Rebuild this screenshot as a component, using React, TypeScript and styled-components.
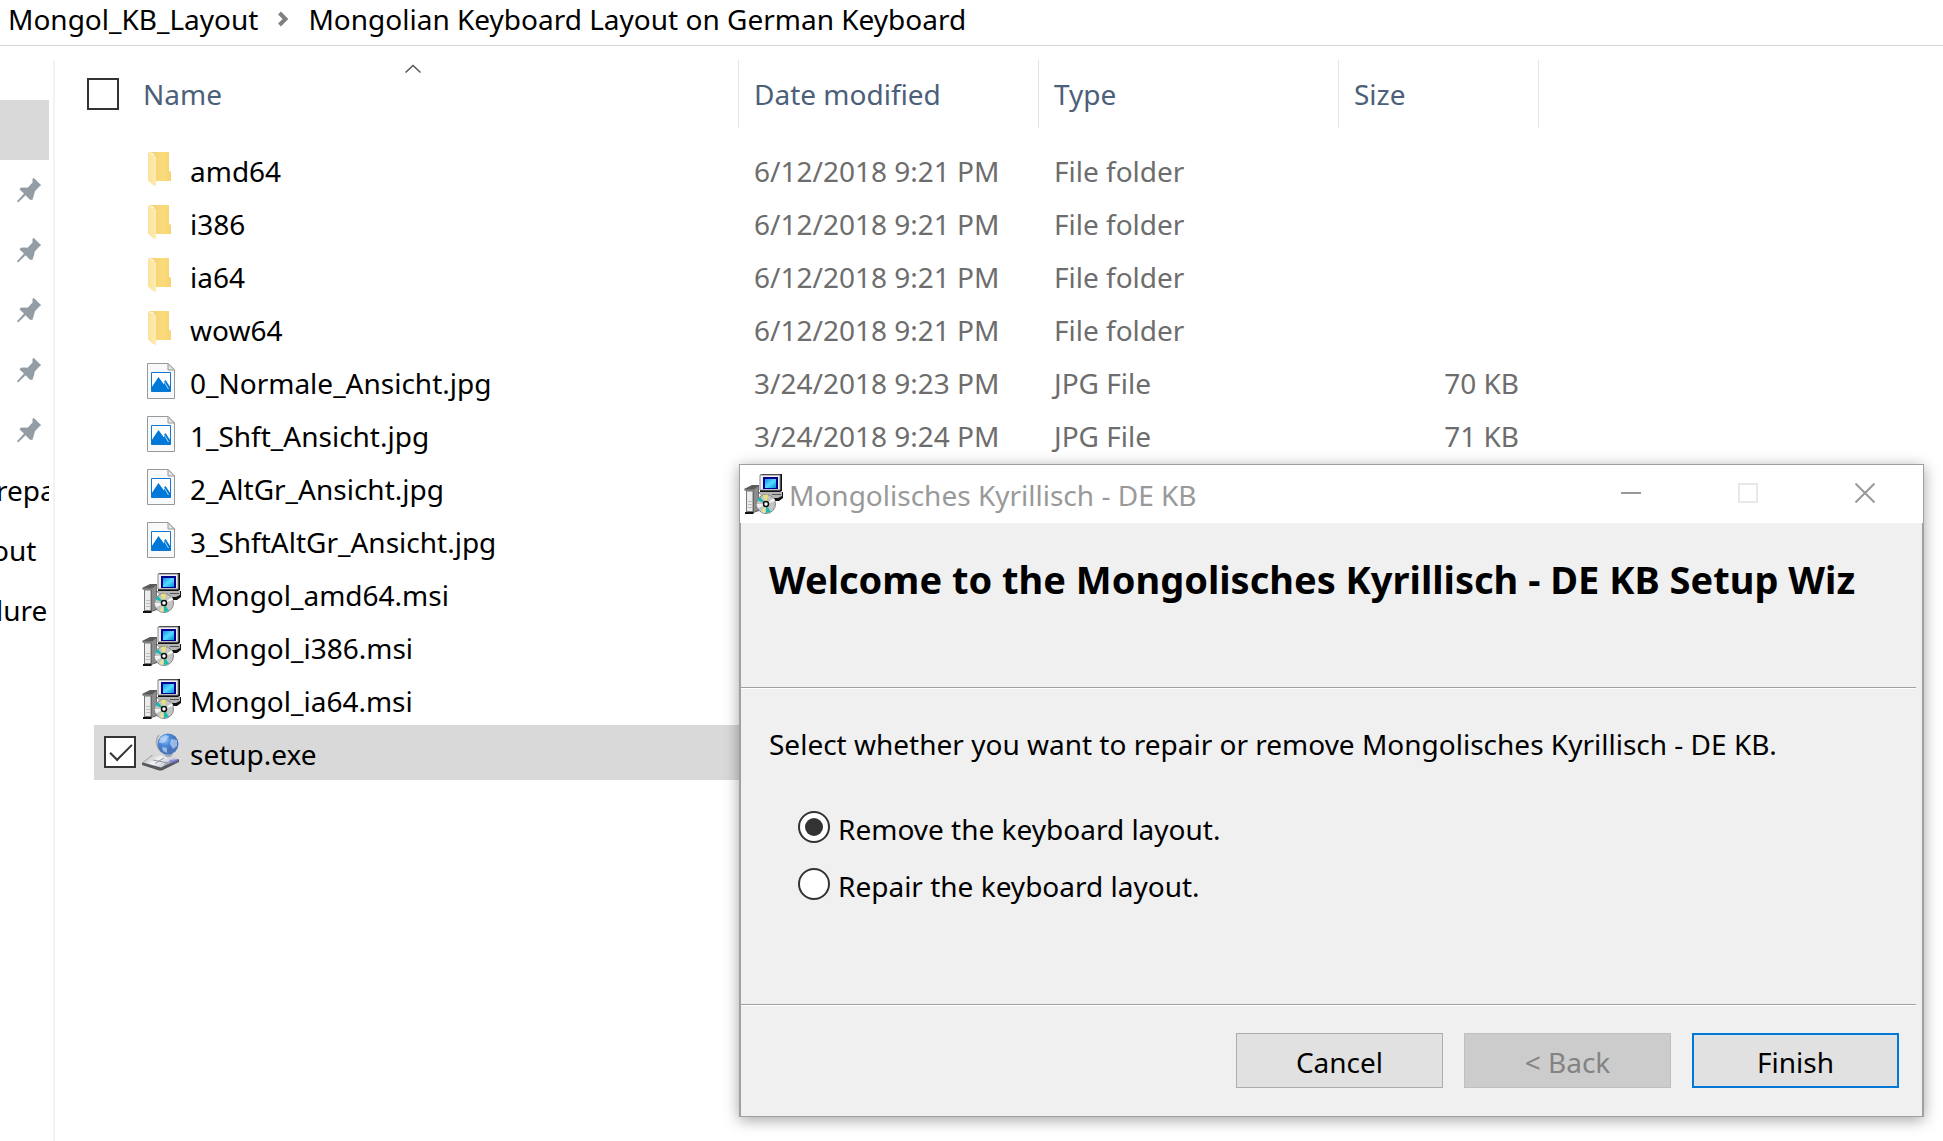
import React, { useState } from "react";
import styled, { createGlobalStyle, css } from "styled-components";

const GlobalStyle = createGlobalStyle`
  *, *::before, *::after { box-sizing: border-box; }
  body {
    margin: 0;
    background: #fff;
    color: #000;
    font-family: "Noto Sans", "Open Sans", sans-serif;
    font-size: 28px;
    line-height: 38px;
  }
  button, input { font: inherit; margin: 0; }
`;

const Page = styled.div`
  position: relative;
  min-height: 100vh;
  display: flex;
  flex-direction: column;
  overflow: hidden;
`;

const Breadcrumb = styled.nav`
  display: flex;
  align-items: center;
  gap: 18px;
  padding: 0 8px 7px;
  border-bottom: 1px solid #d5d5d5;
`;

const Crumb = styled.a`
  color: #000;
  text-decoration: none;
  white-space: nowrap;
`;

const Explorer = styled.div`
  flex: 1;
  display: flex;
  padding-top: 14px;
`;

const Sidebar = styled.aside`
  flex: none;
  width: 55px;
  padding: 40px 4px 0 0;
  border-right: 2px solid #f3f3f3;
`;

const SideItem = styled.div<{ $selected?: boolean }>`
  height: 60px;
  display: flex;
  align-items: center;
  overflow: hidden;
  white-space: nowrap;
  background: ${(p) => (p.$selected ? "#d9d9d9" : "transparent")};
`;

const PinSlot = styled.span`
  display: flex;
  padding-left: 16px;
`;

const SideText = styled.span<{ $scrolled: number }>`
  margin-left: -${(p) => p.$scrolled}px;
`;

const Files = styled.main`
  flex: 1;
  min-width: 0;
`;

const FileTable = styled.table`
  width: 1484px;
  table-layout: fixed;
  border-spacing: 0;
  td, th { padding: 0; text-align: left; font-weight: 400; white-space: nowrap; }
`;

const Col = styled.col<{ $width: number }>`
  width: ${(p) => p.$width}px;
`;

const HeadCell = styled.th`
  height: 68px;
  color: #4c607a;
  border-right: 1px solid #e5e5e5;
`;

const HeadLabel = styled.div`
  padding-left: 15px;
`;

const NameHead = styled.div`
  position: relative;
  height: 68px;
  display: flex;
  align-items: center;
  gap: 24px;
  padding-left: 32px;
`;

const SortMark = styled.svg`
  position: absolute;
  left: 349px;
  top: 4px;
`;

const HeadGap = styled.tr`
  height: 14px;
`;

const Row = styled.tr<{ $selected: boolean }>`
  height: 53px;
  vertical-align: top;
  td { background: ${(p) => (p.$selected ? "#d9d9d9" : "transparent")}; background-clip: padding-box; }
  ${(p) => p.$selected && css`height: 55px;`}
`;

const NameCell = styled.td`
  border-left: 39px solid transparent;
`;

const NameLabel = styled.label`
  display: flex;
  align-items: center;
  padding-left: 10px;
`;

const CheckSlot = styled.span`
  flex: none;
  display: flex;
  width: 38px;
`;

const IconSlot = styled.span`
  flex: none;
  display: flex;
  width: 48px;
`;

const NameText = styled.span`
  padding-top: 5px;
  line-height: 48px;
`;

const InfoCell = styled.td<{ $end?: boolean }>`
  && {
    padding: 5px 20px 0 15px;
    color: #6d6d6d;
    line-height: 48px;
    text-align: ${(p) => (p.$end ? "right" : "left")};
  }
`;

const CheckBox = styled.input`
  appearance: none;
  position: relative;
  flex: none;
  width: 32px;
  height: 32px;
  border: 2px solid #333;
  background: #fff;
  &:checked::after {
    content: "";
    position: absolute;
    left: 4px;
    top: 6px;
    width: 22px;
    height: 11px;
    border: solid #333;
    border-width: 0 0 2px 2px;
    transform: rotate(-45deg);
  }
`;

const Dialog = styled.section`
  position: absolute;
  left: 739px;
  right: 19px;
  top: 464px;
  border: 1px solid #a0a0a0;
  background: #f0f0f0;
  box-shadow: 0 3px 14px rgba(0, 0, 0, 0.36);
`;

const TitleBar = styled.header`
  display: flex;
  align-items: center;
  height: 58px;
  padding-left: 4px;
  background: #fff;
`;

const Title = styled.span`
  flex: 1;
  padding: 2px 0 0 5px;
  color: #999;
`;

const WindowButton = styled.button`
  width: 117px;
  height: 58px;
  display: flex;
  align-items: center;
  justify-content: center;
  padding: 0 0 2px;
  border: 0;
  background: transparent;
`;

const DialogBody = styled.div`
  border: solid #a0a0a0;
  border-width: 0 1px;
`;

const Groove = styled.hr`
  height: 2px;
  margin: 0 6px 0 0;
  border: 0;
  border-top: 1px solid #a0a0a0;
  background: #fff;
`;

const Heading = styled.h1`
  height: 164px;
  margin: 0;
  padding: 29px 28px 0;
  overflow: hidden;
  font-size: 38px;
  line-height: 54px;
  font-weight: 700;
  white-space: nowrap;
`;

const Choices = styled.fieldset`
  height: 315px;
  margin: 0;
  padding: 0;
  border: 0;
`;

const Question = styled.legend`
  padding: 36px 28px 35px;
`;

const Choice = styled.label`
  display: flex;
  align-items: center;
  height: 57px;
  gap: 8px;
  padding-left: 57px;
`;

const ChoiceText = styled.span`
  padding-top: 4px;
`;

const Radio = styled.input`
  appearance: none;
  flex: none;
  display: grid;
  place-items: center;
  width: 32px;
  height: 32px;
  border: 2px solid #333;
  border-radius: 50%;
  background: #fff;
  &:checked::after {
    content: "";
    width: 18px;
    height: 18px;
    border-radius: 50%;
    background: #333;
  }
`;

const Actions = styled.footer`
  display: flex;
  justify-content: flex-end;
  gap: 21px;
  padding: 27px 23px 28px;
`;

const ActionButton = styled.button<{ $primary?: boolean }>`
  width: 207px;
  height: 55px;
  padding: 3px 0 0;
  color: #000;
  background: #e1e1e1;
  border: ${(p) => (p.$primary ? "2px solid #0078d7" : "1px solid #adadad")};
  &:disabled { color: #838383; background: #ccc; border-color: #bfbfbf; }
`;

const PinIcon = () => (
  <svg width="26" height="26" viewBox="0 0 26 26" aria-hidden="true">
    <path d="M17.6.8 25.2 8.2 23.6 9.2 18.8 14.6 18 18 16.4 23 13.6 22.4 9.6 18.2 2.6 25 1.4 25.2 1.2 24 8 16.6 3.6 12.4 4.6 10.8 8.6 10.4 11.6 10.8 16.6 5.6 16.4 2.6Z" fill="#939da5" />
  </svg>
);

const FolderIcon = () => (
  <svg width="40" height="34" viewBox="-6 0 40 34" aria-hidden="true">
    <path d="M1 0H21V18.5L23 20V29H6V2Z" fill="url(#folderBack)" />
    <path d="M0 0 8 4.6V34L5 33 0 28.5Z" fill="url(#folderFlap)" />
  </svg>
);

const PictureIcon = () => (
  <svg width="40" height="36" viewBox="-5 0 40 36" aria-hidden="true">
    <path d="M.5.5H21L27.500 7V35.500H.5Z" fill="#f8f9fa" stroke="#999" />
    <path d="M21 .5V7H27.500Z" fill="#e4e4e4" stroke="#999" />
    <path d="M4.500 9.500H23.500V28.500H4.500Z" fill="#fff" stroke="#1476d1" />
    <path d="M4.500 24.500 11.500 14 17 21.500 17 18.500 18.500 17 23.500 24.500V28.500H4.500Z" fill="#0078d7" />
    <path d="M17 18.500 21.500 26" stroke="#b9dcf7" strokeWidth="1" />
  </svg>
);

const InstallerIcon = () => (
  <svg width="40" height="40" viewBox="0 0 40 40" aria-hidden="true">
    <path d="M0 15 8 11H15V37L9 39H2V17Z" fill="#5a5a5a" />
    <path d="M0 15.500H10L14.500 12V36L10 38V17H1Z" fill="#8c8c8c" />
    <path d="M2.500 17H9V37.500H2.500Z" fill="#ececec" stroke="#777" />
    <path d="M4 27.500H8M4 30.500H8M4 33.500H8" stroke="#bbb" />
    <path d="M1 39H9.500" stroke="#111" strokeWidth="2" />
    <path d="M14 18H39V24L35 27H24Z" fill="#111" />
    <path d="M15 18H38V22L34 24H18Z" fill="#b5b5b5" />
    <path d="M28 20.500H37" stroke="#555" />
    <path d="M18 0H38V17L36 18H16V1Z" fill="#111" />
    <path d="M16 1H36V16H16Z" fill="#f1f1f3" stroke="#868690" />
    <path d="M19 3H34V15H19Z" fill="#00008f" />
    <path d="M21 5H32V14H21Z" fill="url(#screen)" />
    <circle cx="22" cy="30" r="9.500" fill="#c3c6c3" stroke="#858585" strokeWidth="1" />
    <path d="M22 30 19 21 24 20.500Z" fill="#e9e27b" />
    <path d="M22 30 13 26 16 23Z" fill="#18b7b2" />
    <path d="M22 30 22 39 27 38Z" fill="#20bcb0" />
    <path d="M22 30 17 38 21 39Z" fill="#e7e29a" />
    <path d="M22 30 31 27 30 24Z" fill="#f7f7f7" />
    <path d="M22 30 12.500 30 14 34.500Z" fill="#f2f2f2" />
    <circle cx="22" cy="30" r="2.500" fill="#fff" stroke="#111" strokeWidth="1.500" />
  </svg>
);

const SetupIcon = () => (
  <svg width="40" height="40" viewBox="0 0 40 40" aria-hidden="true">
    <path d="M0 31 10 23 37 27.500 37 30 20 38.500 17 38.500 0 33Z" fill="#55585c" />
    <path d="M1 30.500 11 22.500 36 27 19 35.500Z" fill="url(#slab)" />
    <path d="M13 31.500 22 26M22 33 30 28M11 28 26 31" stroke="#92959c" fill="none" />
    <path d="M28 28 37 27 35 30 27 32Z" fill="#7774d8" opacity=".65" />
    <path d="M17 3C12 9 15 19 23 22" stroke="#aaa" strokeWidth="1.500" fill="none" />
    <path d="M22 22H31L29 25H24Z" fill="#a5a8b8" />
    <circle cx="26" cy="12" r="10.500" fill="url(#globe)" />
    <path d="M18 6 23 3 27 4 24 8 21 11 17 11ZM29 7 35 8 35 14 31 17 28 12ZM20 15 25 16 25 21 21 19Z" fill="#c5ddf9" opacity=".65" />
  </svg>
);

const GradientDefs = styled.svg`
  position: absolute;
`;

const Gradients = () => (
  <GradientDefs width="0" height="0" aria-hidden="true">
    <defs>
      <linearGradient id="folderBack"><stop offset="0" stopColor="#efce70" /><stop offset=".6" stopColor="#fadb7c" /><stop offset="1" stopColor="#f6d470" /></linearGradient>
      <linearGradient id="folderFlap"><stop offset="0" stopColor="#fbe39a" /><stop offset="1" stopColor="#fdebb0" /></linearGradient>
      <linearGradient id="screen" x2="1" y2="1"><stop offset="0" stopColor="#168fe8" /><stop offset=".5" stopColor="#55dcff" /><stop offset="1" stopColor="#078bd8" /></linearGradient>
      <linearGradient id="slab" x2="1" y2=".5"><stop offset="0" stopColor="#a9abad" /><stop offset=".5" stopColor="#f1f2f4" /><stop offset="1" stopColor="#b8b9d0" /></linearGradient>
      <radialGradient id="globe" cx=".35" cy=".3"><stop offset="0" stopColor="#a6cdf8" /><stop offset=".55" stopColor="#4b88dc" /><stop offset="1" stopColor="#4774bb" /></radialGradient>
    </defs>
  </GradientDefs>
);

const icons = { folder: FolderIcon, picture: PictureIcon, installer: InstallerIcon, setup: SetupIcon };

type FileEntry = { name: string; icon: keyof typeof icons; date?: string; type?: string; size?: string };

const files: FileEntry[] = [
  { name: "amd64", icon: "folder", date: "6/12/2018 9:21 PM", type: "File folder" },
  { name: "i386", icon: "folder", date: "6/12/2018 9:21 PM", type: "File folder" },
  { name: "ia64", icon: "folder", date: "6/12/2018 9:21 PM", type: "File folder" },
  { name: "wow64", icon: "folder", date: "6/12/2018 9:21 PM", type: "File folder" },
  { name: "0_Normale_Ansicht.jpg", icon: "picture", date: "3/24/2018 9:23 PM", type: "JPG File", size: "70 KB" },
  { name: "1_Shft_Ansicht.jpg", icon: "picture", date: "3/24/2018 9:24 PM", type: "JPG File", size: "71 KB" },
  { name: "2_AltGr_Ansicht.jpg", icon: "picture" },
  { name: "3_ShftAltGr_Ansicht.jpg", icon: "picture" },
  { name: "Mongol_amd64.msi", icon: "installer" },
  { name: "Mongol_i386.msi", icon: "installer" },
  { name: "Mongol_ia64.msi", icon: "installer" },
  { name: "setup.exe", icon: "setup" },
];

const sideTexts = [
  { text: "repa", scrolled: 4 },
  { text: "out", scrolled: 8 },
  { text: "lure", scrolled: 4 },
];

const choices = [
  { value: "remove", label: "Remove the keyboard layout." },
  { value: "repair", label: "Repair the keyboard layout." },
];

export default function App() {
  const [choice, setChoice] = useState("remove");
  const [selected, setSelected] = useState("setup.exe");

  return (
    <Page>
      <GlobalStyle />
      <Gradients />
      <Breadcrumb aria-label="Folder path">
        <Crumb href="#parent">Mongol_KB_Layout</Crumb>
        <svg width="14" height="16" viewBox="0 0 14 16" aria-hidden="true">
          <path d="M3.500 2 9.500 8 3.500 14" fill="none" stroke="#808080" strokeWidth="4" />
        </svg>
        <Crumb href="#folder">Mongolian Keyboard Layout on German Keyboard</Crumb>
      </Breadcrumb>

      <Explorer>
        <Sidebar>
          <SideItem $selected />
          {[0, 1, 2, 3, 4].map((n) => (
            <SideItem key={n}><PinSlot><PinIcon /></PinSlot></SideItem>
          ))}
          {sideTexts.map((s) => (
            <SideItem key={s.text}><SideText $scrolled={s.scrolled}>{s.text}</SideText></SideItem>
          ))}
        </Sidebar>

        <Files>
          <FileTable>
            <colgroup>
              <Col $width={684} /><Col $width={300} /><Col $width={300} /><Col $width={200} />
            </colgroup>
            <thead>
              <tr>
                <HeadCell>
                  <NameHead>
                    <CheckBox type="checkbox" aria-label="Select all" />
                    Name
                    <SortMark width="18" height="10" viewBox="0 0 18 10" aria-hidden="true">
                      <path d="M1.500 8.500 9 1.500 16.500 8.500" fill="none" stroke="#555" strokeWidth="1.500" />
                    </SortMark>
                  </NameHead>
                </HeadCell>
                <HeadCell><HeadLabel>Date modified</HeadLabel></HeadCell>
                <HeadCell><HeadLabel>Type</HeadLabel></HeadCell>
                <HeadCell><HeadLabel>Size</HeadLabel></HeadCell>
              </tr>
            </thead>
            <tbody>
              <HeadGap><td colSpan={4} /></HeadGap>
              {files.map((f) => {
                const Icon = icons[f.icon];
                const isSelected = f.name === selected;
                return (
                  <Row key={f.name} $selected={isSelected}>
                    <NameCell>
                      <NameLabel>
                        <CheckSlot>
                          {isSelected && <CheckBox type="checkbox" checked onChange={() => setSelected("")} />}
                        </CheckSlot>
                        <IconSlot><Icon /></IconSlot>
                        <NameText>{f.name}</NameText>
                      </NameLabel>
                    </NameCell>
                    <InfoCell>{f.date}</InfoCell>
                    <InfoCell>{f.type}</InfoCell>
                    <InfoCell $end>{f.size}</InfoCell>
                  </Row>
                );
              })}
            </tbody>
          </FileTable>
        </Files>
      </Explorer>

      <Dialog role="dialog" aria-labelledby="dialog-title">
        <TitleBar>
          <InstallerIcon />
          <Title id="dialog-title">Mongolisches Kyrillisch - DE KB</Title>
          <WindowButton type="button" aria-label="Minimize">
            <svg width="20" height="20" viewBox="0 0 20 20"><path d="M0 10H20" stroke="#999" strokeWidth="2" /></svg>
          </WindowButton>
          <WindowButton type="button" aria-label="Maximize" disabled>
            <svg width="20" height="20" viewBox="0 0 20 20"><path d="M1 1H19V19H1Z" fill="none" stroke="#e8e8e8" strokeWidth="2" /></svg>
          </WindowButton>
          <WindowButton type="button" aria-label="Close">
            <svg width="20" height="20" viewBox="0 0 20 20"><path d="M.5.5 19.500 19.500M19.500.5.5 19.500" stroke="#999" strokeWidth="2" /></svg>
          </WindowButton>
        </TitleBar>
        <DialogBody>
          <Heading>Welcome to the Mongolisches Kyrillisch - DE KB Setup Wiz</Heading>
          <Groove />
          <Choices>
            <Question>Select whether you want to repair or remove Mongolisches Kyrillisch - DE KB.</Question>
            {choices.map((c) => (
              <Choice key={c.value}>
                <Radio type="radio" name="action" value={c.value} checked={choice === c.value} onChange={() => setChoice(c.value)} />
                <ChoiceText>{c.label}</ChoiceText>
              </Choice>
            ))}
          </Choices>
          <Groove />
          <Actions>
            <ActionButton type="button">Cancel</ActionButton>
            <ActionButton type="button" disabled>&lt; Back</ActionButton>
            <ActionButton type="button" $primary>Finish</ActionButton>
          </Actions>
        </DialogBody>
      </Dialog>
    </Page>
  );
}
